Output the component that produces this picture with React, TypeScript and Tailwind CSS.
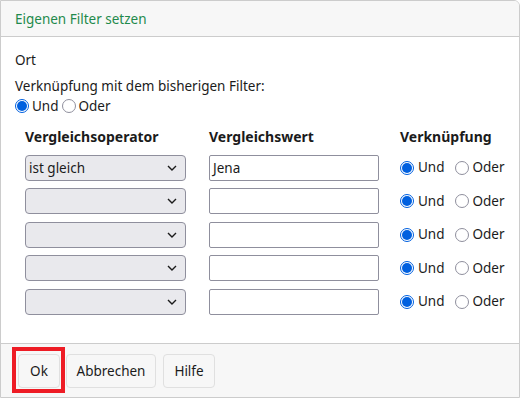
import React from "react";

const font = { fontFamily: '"Segoe UI", "Noto Sans", "Liberation Sans", sans-serif' };

function Radio({ checked, className = "" }: { checked?: boolean; className?: string }) {
  return checked ? (
    <span className={`flex items-center justify-center w-[14px] h-[14px] rounded-full border border-[#0060df] bg-white shrink-0 ${className}`}>
      <span className="w-[10px] h-[10px] rounded-full bg-[#0060df]" />
    </span>
  ) : (
    <span className={`block w-[14px] h-[14px] rounded-full border border-[#8f8f9d] bg-white shrink-0 ${className}`} />
  );
}

function Chevron() {
  return (
    <svg width="10" height="6" viewBox="0 0 10 6" className="shrink-0">
      <path d="M1 1 L5 5 L9 1" fill="none" stroke="#1b1b1b" strokeWidth="1.4" />
    </svg>
  );
}

const rows = ["ist gleich", "", "", "", ""];
const values = ["Jena", "", "", "", ""];

export default function App() {
  return (
    <div className="w-[520px] h-[399px] bg-white text-[13.5px] text-[#1b1b1b]" style={font}>
      <div className="w-[520px] h-[398px] border border-[#cccccc] rounded-tr-[6px] flex flex-col overflow-hidden">
        <div className="h-[36px] bg-[#f7f7f7] border-b border-[#cccccc] flex items-center px-[14px] shrink-0">
          <span className="text-[#1f8a4c] leading-[20px]">Eigenen Filter setzen</span>
        </div>
        <div className="flex-1 px-[14px] pt-[13px]">
          <div className="leading-[20px]">Ort</div>
          <div className="leading-[20px] mt-[6px]">Verknüpfung mit dem bisherigen Filter:</div>
          <div className="flex items-center leading-[20px] h-[20px]">
            <Radio checked />
            <span className="ml-[3px]">Und</span>
            <Radio className="ml-[3px]" />
            <span className="ml-[3px]">Oder</span>
          </div>
          <div className="ml-[10px] mt-[11px] grid grid-cols-[184px_191px_auto] gap-y-[7.5px] items-center">
            <div className="font-bold text-[14px] leading-[20px]">Vergleichsoperator</div>
            <div className="font-bold text-[14px] leading-[20px]">Vergleichswert</div>
            <div className="font-bold text-[14px] leading-[20px]">Verknüpfung</div>
            {rows.map((r, i) => (
              <React.Fragment key={i}>
                <div className="w-[161px] h-[26px] bg-[#e9e9ed] border border-[#8f8f9d] rounded-[4px] flex items-center justify-between pl-[3px] pr-[8px]">
                  <span className="leading-[20px]">{r}</span>
                  <Chevron />
                </div>
                <div className="w-[170px] h-[26px] bg-white border border-[#8f8f9d] rounded-[2px] flex items-center px-[3px]">
                  <span className="leading-[20px]">{values[i]}</span>
                </div>
                <div className="flex items-center h-[20px]">
                  <Radio checked />
                  <span className="ml-[4px]">Und</span>
                  <Radio className="ml-[10px]" />
                  <span className="ml-[4px]">Oder</span>
                </div>
              </React.Fragment>
            ))}
          </div>
        </div>
        <div className="h-[54px] shrink-0 bg-[#f7f7f7] border-t border-[#cccccc] flex items-start pl-[17px] pt-[10px]">
          <div className="relative">
            <button className="w-[42px] h-[34px] bg-[#f7f7f7] border border-[#e0e0e0] rounded-[4px] leading-[20px]">Ok</button>
            <div className="absolute -left-[6px] -top-[7px] -right-[5px] -bottom-[5px] border-4 border-[#ee1c25] pointer-events-none" />
          </div>
          <button className="ml-[6px] w-[90px] h-[34px] bg-[#f7f7f7] border border-[#e0e0e0] rounded-[4px] leading-[20px]">Abbrechen</button>
          <button className="ml-[7px] w-[52px] h-[34px] bg-[#f7f7f7] border border-[#e0e0e0] rounded-[4px] leading-[20px]">Hilfe</button>
        </div>
      </div>
    </div>
  );
}
